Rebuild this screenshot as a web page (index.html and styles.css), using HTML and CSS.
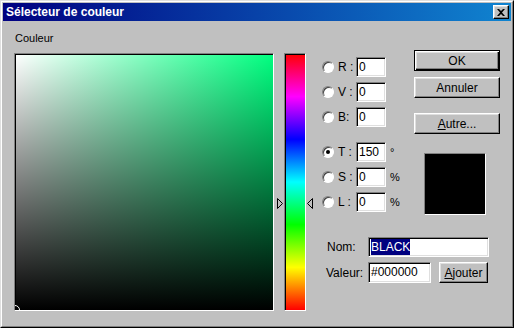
FILE: index.html
```html
<!DOCTYPE html>
<html lang="fr">
<head>
<meta charset="utf-8">
<title>Sélecteur de couleur</title>
<link rel="stylesheet" href="styles.css">
</head>
<body>
<div class="window">
  <div class="titlebar">
    <span class="title">Sélecteur de couleur</span>
    <span class="close">
      <svg width="8" height="7" viewBox="0 0 8 7"><path d="M0 0h2l2 2 2-2h2L5 3.5 8 7H6L4 5 2 7H0l3-3.5z" fill="#000"/></svg>
    </span>
  </div>
  <div class="body">
    <div class="col-field">
      <div class="label">Couleur</div>
      <div class="field"><span class="marker"></span></div>
    </div>
    <div class="spectrum-wrap">
      <div class="spectrum"></div>
      <svg class="arrow arrow-left" width="7" height="11" viewBox="0 0 7 11"><path d="M0.5 0.5 L5.5 5.5 L0.5 10.5 Z" fill="#c0c0c0" stroke="#000" stroke-width="1"/></svg>
      <svg class="arrow arrow-right" width="7" height="11" viewBox="0 0 7 11"><path d="M6.5 0.5 L1.5 5.5 L6.5 10.5 Z" fill="#c0c0c0" stroke="#000" stroke-width="1"/></svg>
    </div>
    <div class="right">
      <div class="top">
        <div class="channels">
          <div class="group">
            <div class="row"><span class="radio"></span><span class="ch">R :</span><div class="box">0</div></div>
            <div class="row"><span class="radio"></span><span class="ch">V :</span><div class="box">0</div></div>
            <div class="row"><span class="radio"></span><span class="ch">B:</span><div class="box">0</div></div>
          </div>
          <div class="group group-hsl">
            <div class="row"><span class="radio checked"></span><span class="ch">T :</span><div class="box">150</div><span class="unit">°</span></div>
            <div class="row"><span class="radio"></span><span class="ch">S :</span><div class="box">0</div><span class="unit">%</span></div>
            <div class="row"><span class="radio"></span><span class="ch">L :</span><div class="box">0</div><span class="unit">%</span></div>
          </div>
        </div>
        <div class="buttons">
          <div class="btn default"><span class="btn-in">OK</span></div>
          <div class="btn"><span class="btn-in">Annuler</span></div>
          <div class="btn btn-autre"><span class="btn-in"><u>A</u>utre...</span></div>
          <div class="swatch"></div>
        </div>
      </div>
      <div class="form">
        <div class="frow"><span class="flabel">Nom:</span><div class="box box-name"><span class="sel">BLACK</span></div></div>
        <div class="frow"><span class="flabel">Valeur:</span><div class="box box-val">#000000</div><div class="btn btn-add"><span class="btn-in"><u>A</u>jouter</span></div></div>
      </div>
    </div>
  </div>
</div>
</body>
</html>
```
FILE: styles.css
```css
html, body {
  margin: 0;
  padding: 0;
  background: #c0c0c0;
}
body {
  font-family: "Liberation Sans", Arial, sans-serif;
  font-size: 11px;
  color: #000;
}
.window {
  width: 514px;
  height: 328px;
  box-sizing: border-box;
  border: 1px solid;
  border-color: #dfdfdf #000 #000 #dfdfdf;
  background: #c0c0c0;
}
.titlebar {
  box-sizing: border-box;
  height: 20px;
  border: 1px solid;
  border-color: #fff #808080 #808080 #fff;
  border-bottom: none;
  padding: 1px 1px 0 1px;
  display: flex;
  align-items: stretch;
}
.titlebar {
  background-clip: content-box;
  background-image: linear-gradient(to right, #000080, #1084d0);
  padding: 1px 1px 0 1px;
}
.title {
  flex: 1;
  color: #fff;
  font-weight: bold;
  font-size: 12px;
  line-height: 18px;
  padding-left: 3px;
}
.close {
  align-self: center;
  margin-right: 2px;
  width: 16px;
  height: 14px;
  box-sizing: border-box;
  background: #c0c0c0;
  border: 1px solid;
  border-color: #fff #000 #000 #fff;
  box-shadow: inset -1px -1px #808080, inset 1px 1px #dfdfdf;
  display: flex;
  align-items: center;
  justify-content: center;
}
.close svg { display: block; margin-left: -1px; }
.body {
  display: flex;
  align-items: flex-start;
  padding: 11px 0 0 12px;
  box-sizing: border-box;
  height: 306px;
  border-left: 1px solid #fff;
  border-right: 1px solid #808080;
  border-bottom: 1px solid #808080;
  margin-top: 0;
}
.label {
  height: 13px;
  line-height: 13px;
  padding-left: 1px;
}
.field {
  margin-top: 8px;
  width: 260px;
  height: 258px;
  box-sizing: border-box;
  border: 1px solid;
  border-color: #808080 #fff #fff #808080;
  position: relative;
  overflow: hidden;
  background-image:
    linear-gradient(to top, #000, rgba(0,0,0,0)),
    linear-gradient(to right, #fff, #00ff80);
  box-shadow: inset 1px 1px #000;
}
.marker {
  position: absolute;
  left: -5px;
  bottom: -5px;
  width: 10px;
  height: 10px;
  box-sizing: border-box;
  border: 1px solid #fff;
  border-radius: 50%;
}
.spectrum-wrap {
  position: relative;
  margin-left: 10px;
  margin-top: 21px;
}
.spectrum {
  width: 22px;
  height: 258px;
  box-sizing: border-box;
  border: 1px solid;
  border-color: #808080 #fff #fff #808080;
  box-shadow: inset 1px 1px #000;
  background-image: linear-gradient(to bottom, #f00, #f0f 16.67%, #00f 33.33%, #0ff 50%, #0f0 66.67%, #ff0 83.33%, #f00);
}
.arrow {
  position: absolute;
  top: 145px;
  display: block;
}
.arrow-left { left: -7px; }
.arrow-right { right: -7px; }
.right {
  margin-left: 16px;
  margin-top: 18px;
  width: 178px;
}
.top {
  display: flex;
  align-items: flex-start;
}
.channels {
  width: 92px;
  margin-top: 7px;
}
.group {
  display: flex;
  flex-direction: column;
  gap: 5px;
}
.group-hsl { margin-top: 15px; }
.row {
  display: flex;
  align-items: center;
  height: 20px;
}
.radio {
  width: 12px;
  height: 12px;
  box-sizing: border-box;
  border-radius: 50%;
  background: #fff;
  border: 1px solid;
  border-color: #808080 #fff #fff #808080;
  box-shadow: inset 1px 1px #404040;
  position: relative;
  margin-right: 4px;
}
.radio.checked::after {
  content: "";
  position: absolute;
  left: 3px;
  top: 3px;
  width: 4px;
  height: 4px;
  border-radius: 50%;
  background: #000;
}
.ch {
  width: 18px;
  font-size: 12px;
}
.box {
  box-sizing: border-box;
  height: 20px;
  width: 30px;
  background: #fff;
  border: 1px solid;
  border-color: #808080 #fff #fff #808080;
  box-shadow: inset 1px 1px #000, inset -1px -1px #dfdfdf;
  padding: 0 2px;
  line-height: 18px;
  font-size: 12px;
  white-space: nowrap;
  overflow: hidden;
}
.unit {
  margin-left: 4px;
  font-size: 11px;
}
.buttons {
  width: 86px;
  display: flex;
  flex-direction: column;
}
.btn {
  box-sizing: border-box;
  width: 86px;
  height: 21px;
  background: #c0c0c0;
  border: 1px solid;
  border-color: #fff #000 #000 #fff;
  box-shadow: inset -1px -1px #808080, inset 1px 1px #dfdfdf;
  display: flex;
  align-items: center;
  justify-content: center;
  font-size: 12px;
}
.btn.default {
  border: 1px solid #000;
  box-shadow: inset 1px 1px #fff, inset -1px -1px #000, inset -2px -2px #808080, inset 2px 2px #dfdfdf;
}
.btn + .btn { margin-top: 6px; }
.btn.btn-autre { margin-top: 15px; }
.btn-in u { text-decoration: underline; text-underline-offset: 1px; }
.swatch {
  margin-top: 19px;
  margin-left: 10px;
  width: 62px;
  height: 62px;
  box-sizing: border-box;
  background: #000;
  border: 1px solid;
  border-color: #808080 #fff #fff #808080;
}
.form {
  margin-top: 22px;
  display: flex;
  flex-direction: column;
  gap: 5px;
}
.frow {
  display: flex;
  align-items: center;
}
.flabel {
  width: 41px;
  padding-left: 5px;
  font-size: 12px;
}
.frow:last-child .flabel { padding-left: 4px; width: 42px; }
.box-name { width: 121px; }
.box-val { width: 63px; height: 21px; line-height: 19px; }
.sel {
  background: #000080;
  color: #fff;
  padding: 1px 0;
}
.btn-add {
  width: 49px;
  margin-left: 8px;
}
```
